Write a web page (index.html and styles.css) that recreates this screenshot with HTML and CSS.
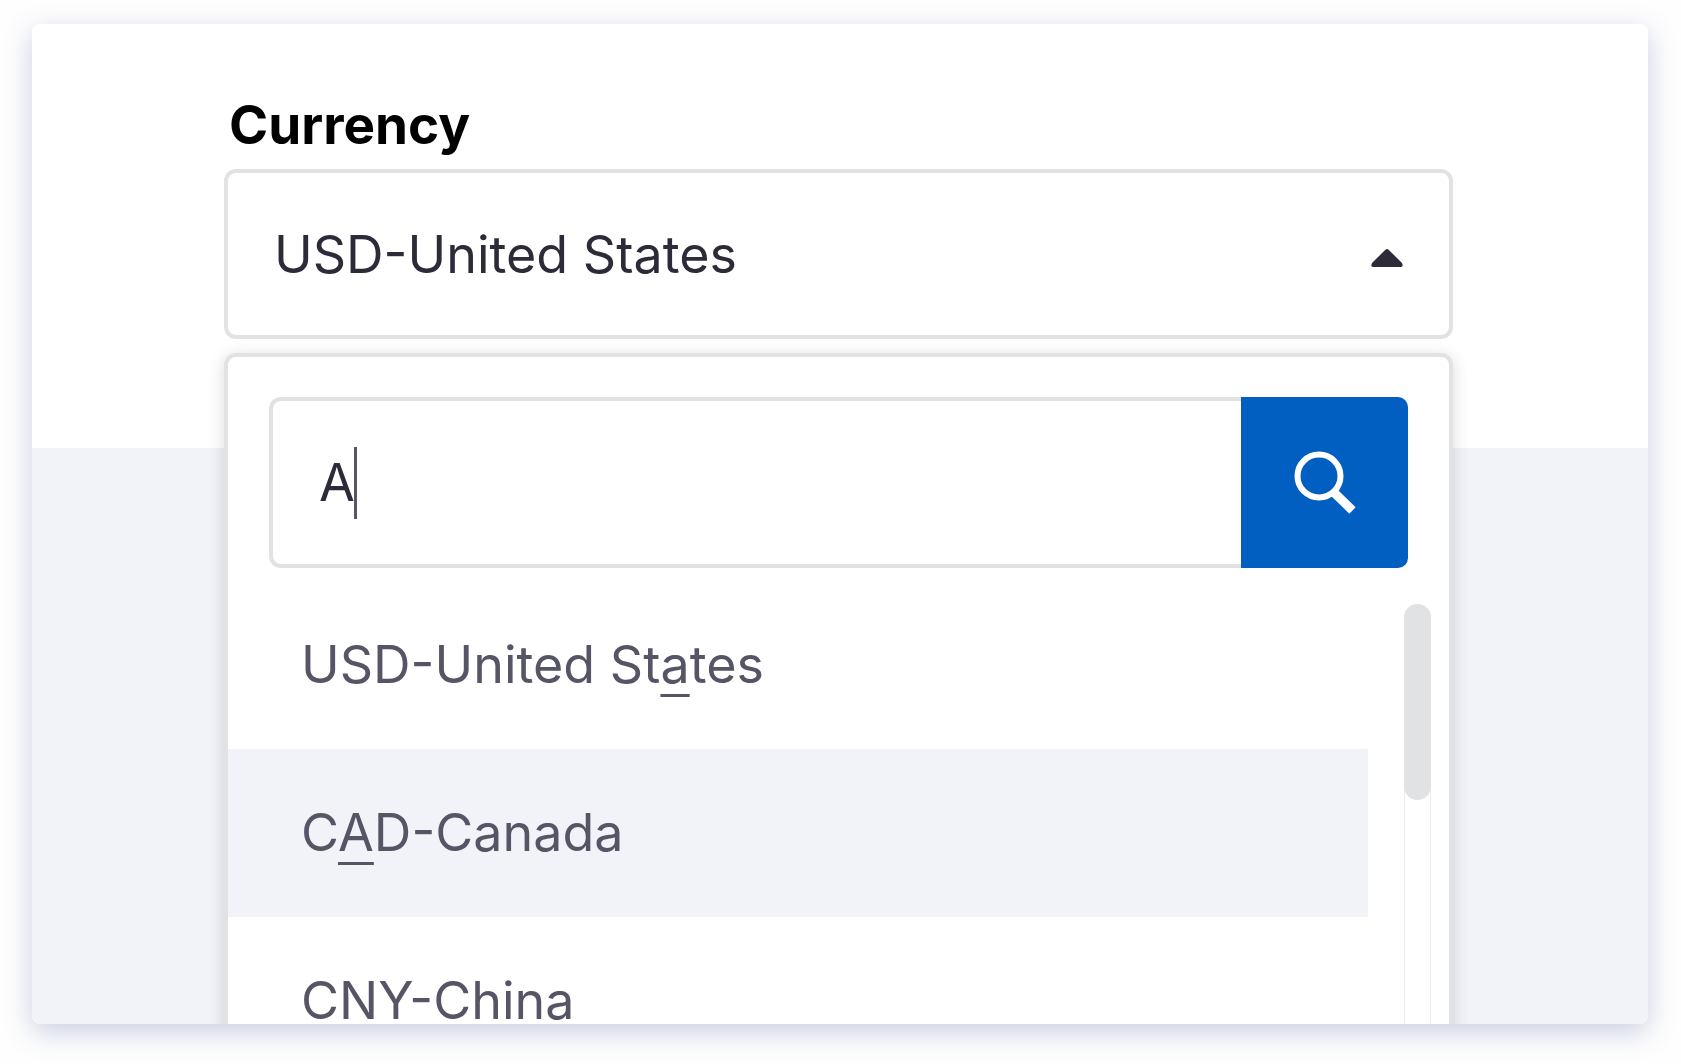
FILE: index.html
```html
<!DOCTYPE html>
<html lang="en">
<head>
<meta charset="utf-8">
<meta name="viewport" content="width=device-width, initial-scale=1">
<title>Currency</title>
<link rel="stylesheet" href="styles.css">
</head>
<body>
<main class="card">
  <label class="label" for="currency">Currency</label>
  <div class="select">
    <select class="select-control" id="currency">
      <option>USD-United States</option>
      <option>CAD-Canada</option>
      <option>CNY-China</option>
    </select>
    <svg class="select-arrow" viewBox="0 0 32 18" aria-hidden="true"><path d="M14.4 .7Q16 -.5 17.6 .7L31 14Q32.600 17.300 30 18H2Q-.600 17.300 1 14Z"/></svg>
  </div>
  <div class="dropdown">
    <form class="search">
      <div class="search-field">
        <input class="search-input" type="text" value="A" aria-label="Search currencies">
        <span class="caret"></span>
      </div>
      <button class="search-button" type="button" aria-label="Search">
        <svg class="search-icon" viewBox="0 0 62 64" aria-hidden="true"><circle cx="25" cy="25" r="21.500"/><path class="search-handle" d="M40 41.500 58.500 59.500"/></svg>
      </button>
    </form>
    <div class="results">
      <ul class="options" role="listbox" aria-label="Currencies">
        <li class="option" role="option">USD-United St<span class="match">a</span>tes</li>
        <li class="option option-active" role="option" aria-selected="true">C<span class="match">A</span>D-Canada</li>
        <li class="option" role="option">CNY-China</li>
      </ul>
      <div class="scrollbar"><div class="scrollbar-thumb"></div></div>
    </div>
  </div>
</main>
</body>
</html>
```
FILE: styles.css
```css
* {
  box-sizing: border-box;
}

body {
  margin: 0;
  padding: 24px 33px 40px 32px;
  background: #fefefe;
  font-family: Inter, "Liberation Sans", sans-serif;
  font-size: 52px;
  font-weight: 400;
  color: #555566;
}

.card {
  display: flex;
  flex-direction: column;
  height: calc(100vh - 64px);
  padding: 69px 195px 0 192px;
  overflow: hidden;
  border-radius: 8px;
  background: linear-gradient(#fff 424px, #f2f3f8 424px);
  box-shadow: 0 8px 28px rgba(70, 85, 150, 0.28);
}

.label {
  flex: none;
  margin-bottom: 12px;
  padding-left: 5px;
  font-size: 53px;
  font-weight: 700;
  line-height: 64px;
  color: #000;
}

.select {
  flex: none;
  display: grid;
  align-items: center;
  height: 170px;
  margin-bottom: 14px;
}

.select-control,
.select-arrow {
  grid-area: 1 / 1;
}

.select-control {
  width: 100%;
  height: 100%;
  padding: 0 96px 0 46px;
  appearance: none;
  border: 4px solid #e1e2e4;
  border-radius: 12px;
  background: #fff;
  font: inherit;
  color: #2d2b38;
}

.select-arrow {
  justify-self: end;
  width: 32px;
  height: 18px;
  margin: 8px 50px 0 0;
  fill: #2d2b38;
  pointer-events: none;
}

.dropdown {
  flex: none;
  border: 4px solid #e1e2e4;
  border-radius: 12px;
  background: #fff;
  box-shadow: 0 3px 16px rgba(60, 65, 85, 0.2);
}

.search {
  display: flex;
  height: 171px;
  margin: 40px 41px 13px;
}

.search-field {
  position: relative;
  flex: 1;
}

.search-input {
  width: 100%;
  height: 100%;
  padding: 0 44px 0 46px;
  border: 4px solid #e1e2e4;
  border-right: 0;
  border-radius: 12px 0 0 12px;
  outline: 0;
  background: #fff;
  font: inherit;
  color: #2d2b38;
  caret-color: transparent;
}

.caret {
  position: absolute;
  top: 50px;
  left: 85px;
  width: 3px;
  height: 72px;
  background: #555566;
}

.search-button {
  display: grid;
  place-items: center;
  width: 167px;
  padding: 0;
  border: 0;
  border-radius: 0 10px 10px 0;
  background: #005fc0;
}

.search-icon {
  width: 62px;
  height: 64px;
  fill: none;
  stroke: #fff;
  stroke-width: 6;
}

.search-handle {
  stroke-width: 9;
}

.results {
  display: flex;
  justify-content: space-between;
}

.options {
  flex: 1;
  margin: 0;
  padding: 0;
  list-style: none;
}

.option {
  height: 168px;
  padding: 0 73px;
  line-height: 168px;
  white-space: nowrap;
}

.option-active {
  background: #f2f3f8;
}

.match {
  text-decoration: underline;
  text-decoration-thickness: 3px;
  text-underline-offset: 11px;
}

.scrollbar {
  width: 27px;
  margin: 23px 18px 0 36px;
  border: solid #ebecf2;
  border-width: 0 1px;
  border-radius: 14px 14px 0 0;
}

.scrollbar-thumb {
  height: 196px;
  margin: 0 -1px;
  border-radius: 14px;
  background: #e1e2e4;
}
```
